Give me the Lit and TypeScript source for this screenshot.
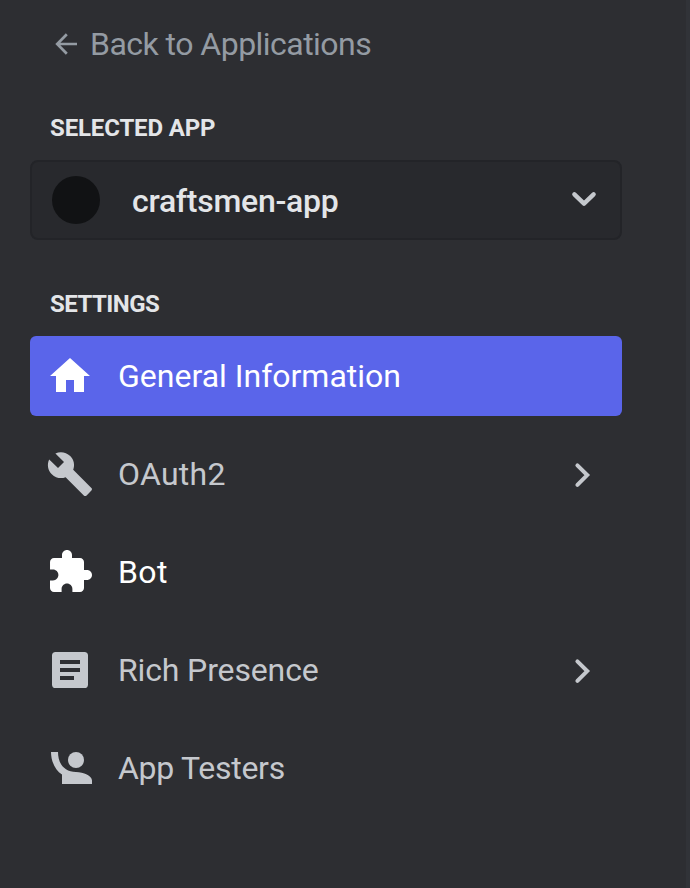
import { LitElement, html, css, svg } from "lit";
import { customElement } from "lit/decorators.js";
import { classMap } from "lit/directives/class-map.js";

const icons = {
  home: svg`<path d="M10 20v-6h4v6h5v-8h3L12 3 2 12h3v8z"/>`,
  wrench: svg`<path d="M22.7 19l-9.1-9.1c.9-2.3.4-5-1.5-6.9-2-2-5-2.4-7.4-1.3L9 6 6 9 1.6 4.7C.4 7.1.9 10.1 2.9 12.1c1.9 1.9 4.6 2.4 6.9 1.5l9.1 9.1c.4.4 1 .4 1.4 0l2.3-2.3c.5-.4.5-1.1.1-1.4z"/>`,
  puzzle: svg`<path d="M20.5 11H19V7c0-1.1-.9-2-2-2h-4V3.5C13 2.12 11.88 1 10.5 1S8 2.12 8 3.5V5H4c-1.1 0-1.99.9-1.99 2v3.8H3.5c1.49 0 2.7 1.21 2.7 2.7s-1.21 2.7-2.7 2.7H2V20c0 1.1.9 2 2 2h3.8v-1.5c0-1.49 1.21-2.7 2.7-2.7s2.7 1.21 2.7 2.7V22H17c1.1 0 2-.9 2-2v-4h1.5c1.38 0 2.5-1.12 2.5-2.5S21.88 11 20.5 11z"/>`,
  article: svg`<path fill-rule="evenodd" d="M4.800 3h14.400a1.800 1.800 0 0 1 1.800 1.800v14.400a1.800 1.800 0 0 1-1.800 1.800H4.800a1.800 1.800 0 0 1-1.800-1.800V4.800a1.800 1.800 0 0 1 1.800-1.800zM7 7v2h10V7zM7 11v2h10v-2zM7 15v2h7v-2z"/>`,
  person: svg`<circle cx="15" cy="8" r="4"/><path d="M2.500 4H6c0 5.800 3.200 10 9 10 3.800 0 8 1.900 8 4.300V20H8v-4.700C4.500 13 2.500 8.500 2.500 4z"/>`,
};

interface Item { label: string; icon: keyof typeof icons; cls: string; arrow?: boolean; active?: boolean; bright?: boolean }

const items: Item[] = [
  { label: "General Information", icon: "home", cls: "general", active: true },
  { label: "OAuth2", icon: "wrench", cls: "oauth", arrow: true },
  { label: "Bot", icon: "puzzle", cls: "bot", bright: true },
  { label: "Rich Presence", icon: "article", cls: "rich", arrow: true },
  { label: "App Testers", icon: "person", cls: "testers" },
];

@customElement("app-root")
export class AppRoot extends LitElement {
  static styles = css`
    :host { display: block; height: 888px; box-sizing: border-box; overflow: hidden;
      background: #2d2e32; border-right: 4px solid #313338;
      padding: 24px 64px 0 30px; font-family: Roboto, "Noto Sans", sans-serif; color: #c5c8cd; }
    svg { display: block; fill: currentColor; flex: none; }
    .stroke { fill: none; stroke: currentColor; }
    .back { display: flex; align-items: center; height: 40px; padding-left: 24px; color: #949ba3;
      font-size: 32px; line-height: 40px; }
    .back span { margin-left: 12px; letter-spacing: -0.530px; }
    h2 { margin: 48px 0 0; padding-left: 20px; height: 32px; font-size: 24px; line-height: 32px; font-weight: 700; color: #e3e5e8; }
    .selected { letter-spacing: -0.150px; }
    .settings { letter-spacing: -0.520px; }
    .picker { margin-top: 16px; height: 80px; box-sizing: border-box; border: 2px solid #232428; border-radius: 8px;
      background: #28292d; display: flex; align-items: center; padding: 0 22px 0 20px; }
    .avatar { width: 48px; height: 48px; border-radius: 50%; background: #111214; margin-right: 32px; }
    .name { flex: 1; padding-top: 1px; font-size: 32px; font-weight: 500; letter-spacing: -0.280px; color: #e3e5e8; white-space: nowrap; }
    nav { margin-top: 16px; display: flex; flex-direction: column; gap: 18px; }
    .item { height: 80px; display: flex; align-items: center; padding: 0 24px 0 16px; border-radius: 6px; }
    .active { background: #5a65ea; color: #fff; }
    .bright { color: #fff; }
    .label { flex: 1; margin-left: 24px; font-size: 32px; line-height: 40px; white-space: nowrap; }
    .oauth { letter-spacing: 0.250px; }
    .bot { letter-spacing: 0.400px; }
    .rich { letter-spacing: -0.140px; }
    .testers { letter-spacing: -0.280px; }
  `;

  render() {
    return html`
      <div class="back">
        <svg class="stroke" width="24" height="24" viewBox="0 0 24 24" stroke-width="2.700"><path d="M12.800 2.200L3.200 12l9.600 9.800M3 12h20"/></svg>
        <span>Back to Applications</span>
      </div>
      <h2 class="selected">SELECTED APP</h2>
      <div class="picker">
        <div class="avatar"></div>
        <span class="name">craftsmen-app</span>
        <svg class="stroke" width="28" height="28" viewBox="0 0 28 28" stroke-width="4.400" stroke-linecap="round" stroke-linejoin="round"><path d="M4.400 8.400l9.600 9.300 9.600-9.300"/></svg>
      </div>
      <h2 class="settings">SETTINGS</h2>
      <nav>
        ${items.map((i) => html`
          <div class=${classMap({ item: true, active: !!i.active, bright: !!i.bright })}>
            <svg width="48" height="48" viewBox="0 0 24 24">${icons[i.icon]}</svg>
            <span class="label"><span class=${i.cls}>${i.label}</span></span>
            ${i.arrow ? html`<svg class="stroke" width="28" height="28" viewBox="0 0 28 28" stroke-width="4" stroke-linecap="round"><path d="M7.400 5.400l9.800 9.700-9.800 9.700"/></svg>` : ""}
          </div>`)}
      </nav>`;
  }
}
